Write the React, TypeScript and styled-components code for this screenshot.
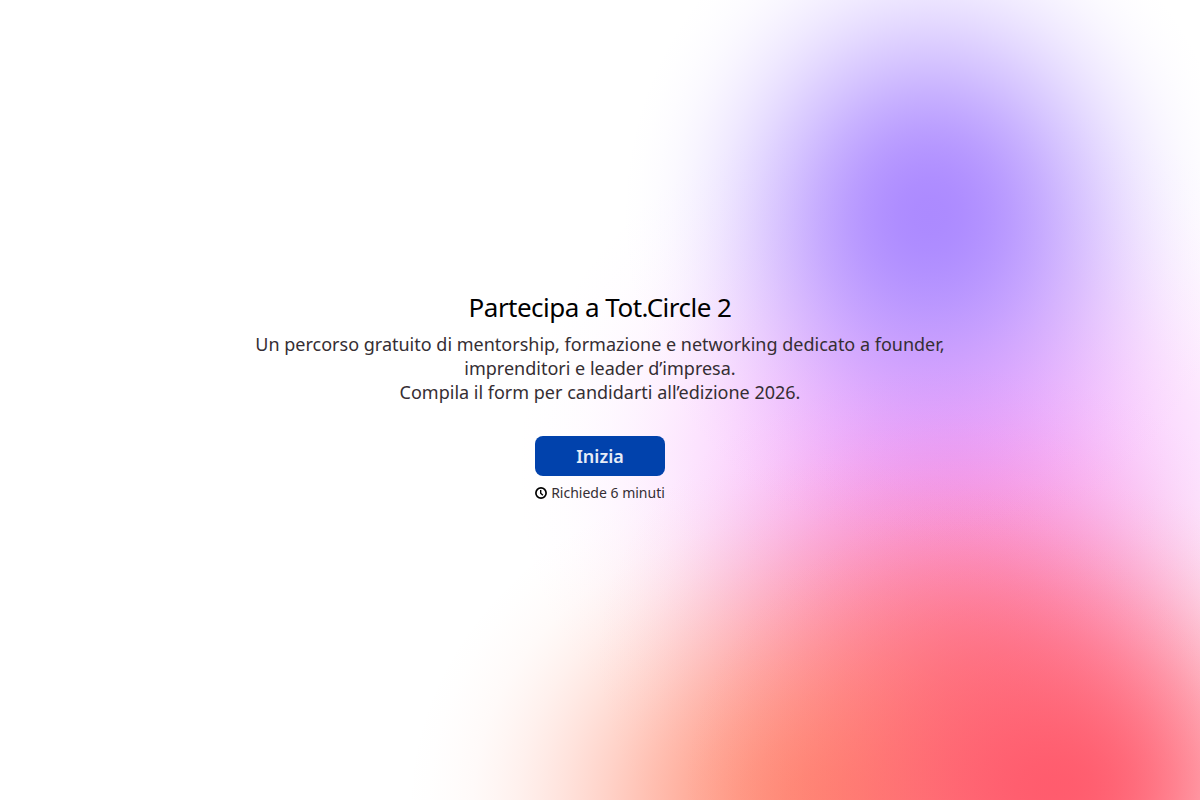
import React from "react";
import styled, { createGlobalStyle } from "styled-components";

const GlobalStyle = createGlobalStyle`
  *, *::before, *::after { box-sizing: border-box; }
  body { margin: 0; background: #fff; }
`;

/* Elliptical glow with a smooth cosine falloff to transparent. */
const glow = (rgb: string, size: string, at: string, strength = 1) => {
  const steps = 20;
  const stops = Array.from({ length: steps + 1 }, (_, i) => {
    const t = i / steps;
    const alpha = strength * Math.max(0, Math.cos((t * Math.PI) / 2)) ** 2.6;
    return `rgba(${rgb}, ${alpha.toFixed(3)}) ${(t * 100).toFixed(1)}%`;
  });
  return `radial-gradient(${size} at ${at}, ${stops.join(", ")})`;
};

const backdrop = [
  glow("172, 138, 255", "27% 44%", "77.5% 27%"),
  glow("255, 90, 108", "33% 41%", "88% 99%", 0.98),
  glow("255, 138, 112", "37% 46%", "69% 101%", 0.95),
  glow("255, 120, 160", "32% 38%", "80% 82%", 0.85),
  glow("245, 160, 252", "38% 50%", "79% 59%", 0.92),
].join(", ");

const Page = styled.main`
  min-height: 100vh;
  display: flex;
  align-items: center;
  justify-content: center;
  padding: 32px 40px 38px;
  background: ${backdrop}, #fff;
  font-family: "Noto Sans", sans-serif;
  color: #352e33;
`;

const Welcome = styled.section`
  width: 100%;
  max-width: 720px;
  display: flex;
  flex-direction: column;
  align-items: center;
  text-align: center;
`;

const Title = styled.h1`
  margin: 0 0 10px;
  font-size: 26px;
  line-height: 30px;
  font-weight: 400;
  letter-spacing: -0.02em;
  color: #000;
`;

const Description = styled.p`
  margin: 0 0 32px;
  font-size: 18px;
  line-height: 24px;
`;

const StartButton = styled.button`
  height: 40px;
  min-width: 130px;
  padding: 0 16px;
  border: 0;
  border-radius: 8px;
  background: #0142ac;
  color: #e6ecf7;
  font: 600 18px/24px "Noto Sans", sans-serif;
  cursor: pointer;
`;

const Duration = styled.p`
  margin: 8px 0 0;
  display: flex;
  align-items: center;
  gap: 4px;
  font-size: 14px;
  line-height: 18px;
`;

const ClockIcon = () => (
  <svg width="12" height="12" viewBox="0 0 12 12" fill="none" stroke="#000" aria-hidden="true">
    <circle cx="6" cy="6" r="5.1" strokeWidth="1.7" />
    <path d="M5.7 3v3.2l2.2 2.1" strokeWidth="1.4" />
  </svg>
);

export default function App() {
  return (
    <>
      <GlobalStyle />
      <Page>
        <Welcome>
          <Title>Partecipa a Tot.Circle 2</Title>
          <Description>
            Un percorso gratuito di mentorship, formazione e networking dedicato a founder, imprenditori e leader
            d’impresa.
            <br />
            Compila il form per candidarti all’edizione 2026.
          </Description>
          <StartButton type="button">Inizia</StartButton>
          <Duration>
            <ClockIcon />
            Richiede 6 minuti
          </Duration>
        </Welcome>
      </Page>
    </>
  );
}
